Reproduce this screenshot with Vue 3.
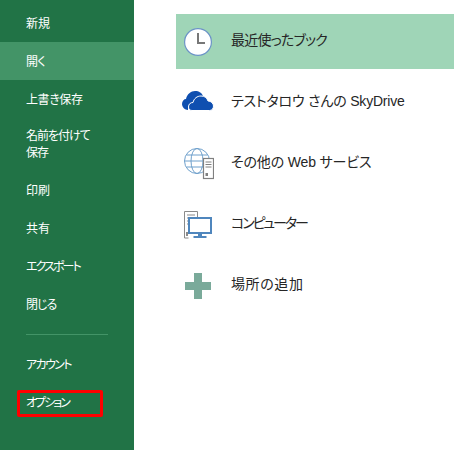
<script setup>
const top = [
  { label: '新規', active: false, track: 0 },
  { label: '開く', active: true, track: -0.5 },
  { label: '上書き保存', active: false, track: -0.4 },
  { label: '名前を付けて保存', active: false, tall: true, track: -1 },
  { label: '印刷', active: false, track: 0 },
  { label: '共有', active: false, track: 0 },
  { label: 'エクスポート', active: false, track: -1.9 },
  { label: '閉じる', active: false, track: -1 }
]
const bottom = [
  { label: 'アカウント', track: -1.6 },
  { label: 'オプション', track: -2 }
]
const px = (n) => ({ letterSpacing: n + 'px' })
</script>

<template>
  <div class="page">
    <aside class="side">
      <div class="spacer-top"></div>
      <div v-for="m in top" :key="m.label" class="item" :class="{ active: m.active, tall: m.tall }">
        <span class="label" :style="px(m.track)">{{ m.label }}</span>
      </div>
      <div class="rule"></div>
      <div v-for="b in bottom" :key="b.label" class="item" :class="{ marked: b.label === 'オプション' }">
        <span class="label" :style="px(b.track)">{{ b.label }}</span>
      </div>
    </aside>
    <main class="main">
      <div class="place current">
        <svg class="ico" viewBox="0 0 32 32">
          <circle cx="16" cy="16" r="13.4" fill="#fff" stroke="#6b93c6" stroke-width="1.2" />
          <path d="M16 7v10h7" fill="none" stroke="#777" stroke-width="2" />
        </svg>
        <span class="name" :style="px(-0.8)">最近使ったブック</span>
      </div>
      <div class="place">
        <svg class="ico" viewBox="0 0 32 32">
          <path d="M0 20c0-3 2-5 4-5 1-5 5-8 9-8 4 0 7 2 8 5-6 0-9 3-10 7-3 0-5 3-5 7-3 0-6-3-6-6z" fill="#0f4fb0" />
          <path d="M6.500 23c0-3 2-4.500 4.500-4.500 1-4 4-6.500 8-6.500s6 2 7 5c3 0 5.500 2.500 5.500 5s-1.500 4.500-4 4.500H10c-2 0-3.500-1.500-3.500-3.500z" fill="#0f4fb0" stroke="#fff" stroke-width="1" />
        </svg>
        <span class="name" :style="px(-0.2)">テストタロウ さんの SkyDrive</span>
      </div>
      <div class="place">
        <svg class="ico low" viewBox="0 0 32 32">
          <circle cx="15" cy="13" r="12.500" fill="#fff" stroke="#6fa0cc" stroke-width="1" />
          <ellipse cx="15" cy="13" rx="6" ry="12.500" fill="none" stroke="#6fa0cc" stroke-width="1" />
          <path d="M2.500 13h25M4.500 7h21M4.500 19h21" fill="none" stroke="#6fa0cc" stroke-width="1" />
          <rect x="21.500" y="10.500" width="10" height="20" fill="#fff" stroke="#808080" stroke-width="1.2" />
          <path d="M23.500 14h6M23.500 16.500h6M23.500 19h6" stroke="#808080" />
          <rect x="23.500" y="25" width="2.500" height="3" fill="#808080" />
        </svg>
        <span class="name" :style="px(-0.15)">その他の Web サービス</span>
      </div>
      <div class="place">
        <svg class="ico low" viewBox="0 0 32 32">
          <path d="M2.500 29V2.500h13v6" fill="#fff" stroke="#8a8a8a" />
          <path d="M2.500 29h4M5 6h8M5 9h8M5 12h2M5 15h2" stroke="#8a8a8a" fill="none" />
          <rect x="4" y="23" width="2" height="4" fill="#8a8a8a" />
          <rect x="7" y="9" width="22" height="15" fill="#fff" stroke="#4f86bd" stroke-width="2" />
          <rect x="16" y="24" width="4" height="3" fill="#4f86bd" />
          <rect x="11.500" y="27" width="13" height="2" fill="#4f86bd" />
        </svg>
        <span class="name" :style="px(-2.1)">コンピューター</span>
      </div>
      <div class="place">
        <svg class="ico low" viewBox="0 0 32 32">
          <path d="M12 3h8v9h9v8h-9v9h-8v-9H3v-8h9z" fill="#7aaa9a" />
        </svg>
        <span class="name" :style="px(0.6)">場所の追加</span>
      </div>
    </main>
  </div>
</template>

<style>
html, body { margin: 0; background: #fff; }
</style>

<style scoped>
.page {
  display: flex;
  width: 459px;
  height: 450px;
  overflow: hidden;
  font-family: "Liberation Sans", "Noto Sans CJK JP", sans-serif;
  font-feature-settings: "palt";
}
.side {
  width: 134px;
  flex: none;
  background: #217346;
  color: #fff;
  font-size: 12px;
  display: flex;
  flex-direction: column;
}
.spacer-top { height: 4px; flex: none; }
.item {
  position: relative;
  height: 38px;
  flex: none;
  display: flex;
  align-items: center;
  padding-left: 26px;
  padding-bottom: 1px;
  box-sizing: border-box;
}
.item.active { background: #439467; }
.item.tall {
  height: 53px;
  padding-right: 38px;
  padding-bottom: 0;
  line-height: 17px;
}
.rule {
  height: 1px;
  margin: 11px 26px 10px;
  background: #439467;
  flex: none;
}
.item.marked::after {
  content: "";
  position: absolute;
  left: 17px;
  top: 7px;
  width: 86px;
  height: 27px;
  box-sizing: border-box;
  border: 3px solid #f00;
  border-radius: 2px;
}
.main {
  flex: 1;
  padding: 14px 5px 0 42px;
  color: #262626;
  font-size: 14px;
}
.place {
  height: 61px;
  display: flex;
  align-items: center;
  gap: 17px;
  padding-left: 6px;
  box-sizing: border-box;
}
.place.current {
  height: 55px;
  background: #9fd5b7;
}
.place.current .name { padding-bottom: 5px; }
.ico {
  width: 32px;
  height: 32px;
  flex: none;
}
.ico.low { margin-top: 6px; }
</style>
